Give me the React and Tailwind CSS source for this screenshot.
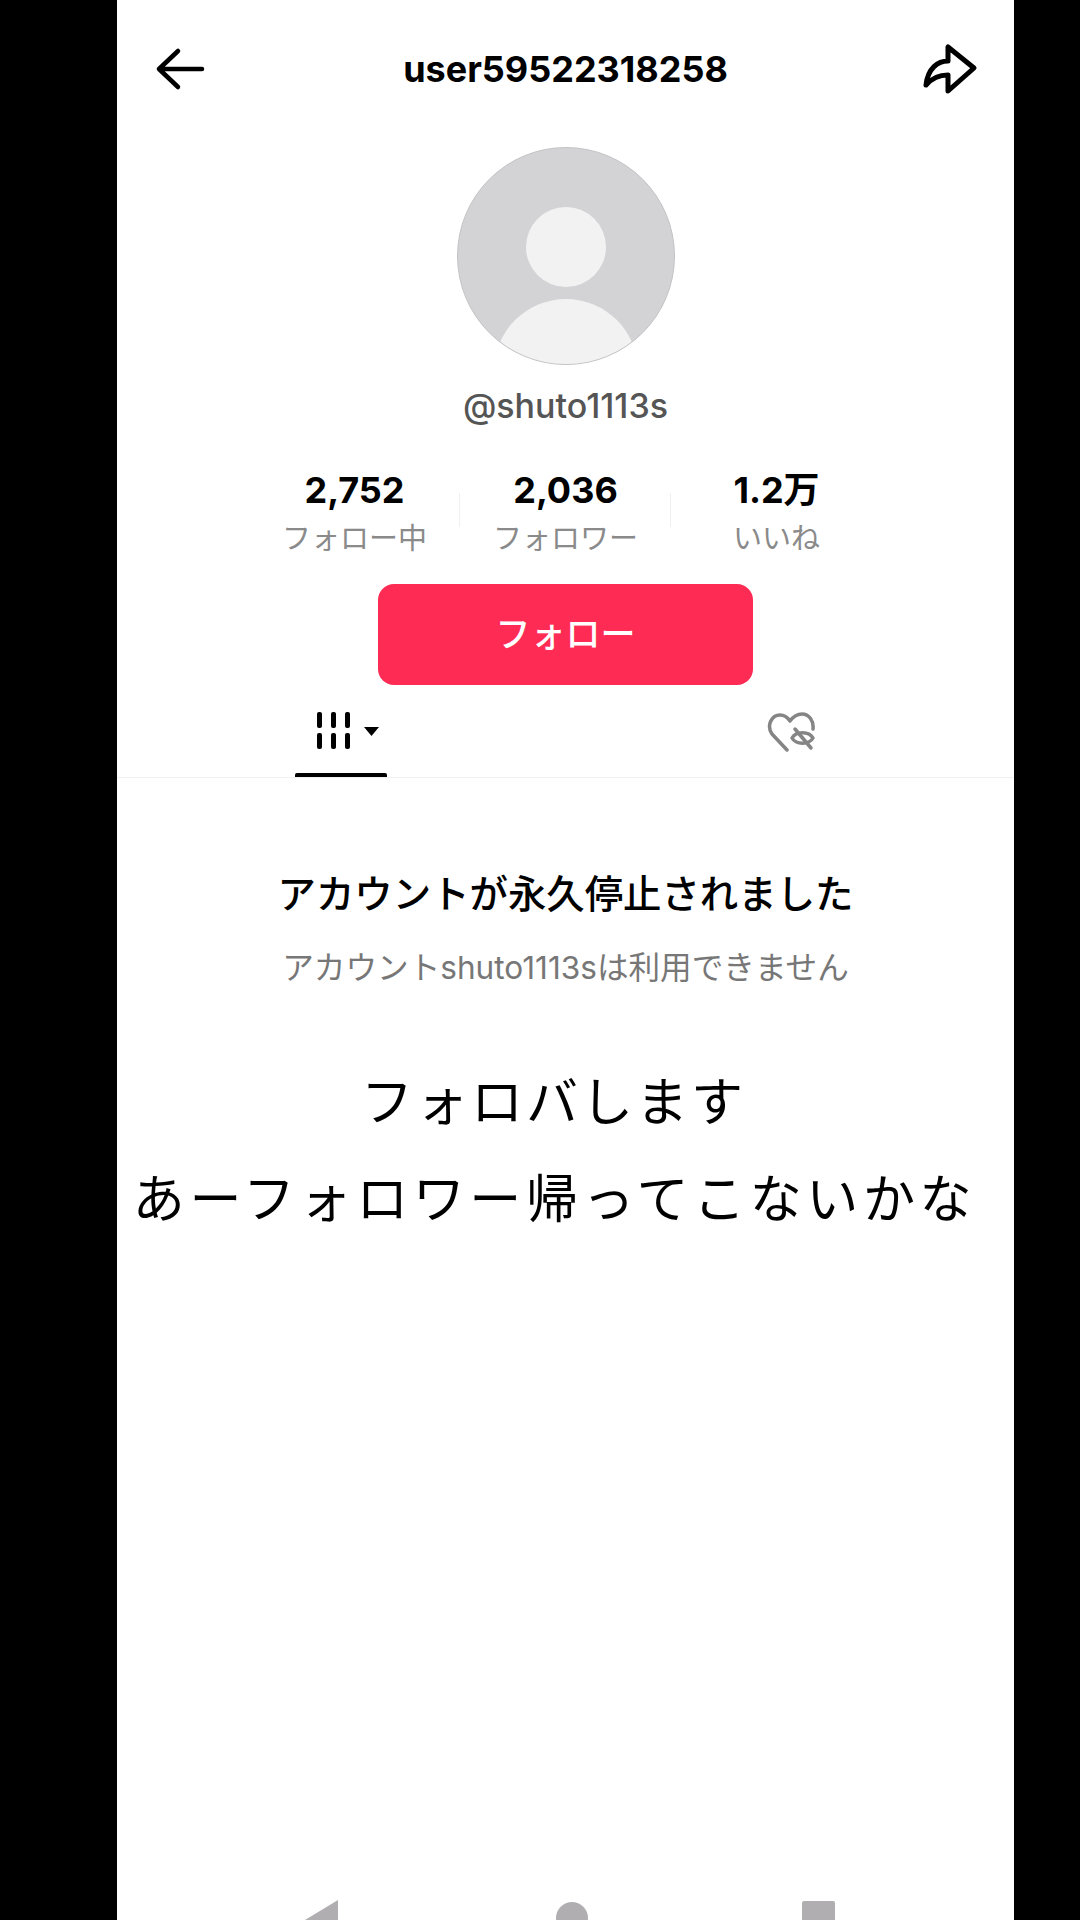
const STATS = [
  { value: '2,752', label: 'フォロー中' },
  { value: '2,036', label: 'フォロワー' },
  { value: '1.2万', label: 'いいね' },
]

function BackIcon() {
  return (
    <svg width="60" height="60" viewBox="0 0 60 60" fill="none" stroke="#000" strokeWidth="4.5" strokeLinecap="round" strokeLinejoin="round">
      <path d="M8 30H51M8 30L27 12M8 30L27 48" />
    </svg>
  )
}

function ShareIcon() {
  return (
    <svg width="60" height="60" viewBox="0 0 60 60" fill="none" stroke="#000" strokeWidth="5" strokeLinejoin="round">
      <path d="M54 29L28 8V22C18 22 8 29 6 46C12 39 20 36 28 36V52Z" />
    </svg>
  )
}

function GridIcon() {
  return (
    <svg width="70" height="40" viewBox="0 0 70 40" fill="#000">
      <rect x="2" y="0" width="5" height="16" rx="2" />
      <rect x="16" y="0" width="5" height="16" rx="2" />
      <rect x="30" y="0" width="5" height="16" rx="2" />
      <rect x="2" y="21" width="5" height="16" rx="2" />
      <rect x="16" y="21" width="5" height="16" rx="2" />
      <rect x="30" y="21" width="5" height="16" rx="2" />
      <path d="M49 15H64L56.500 24Z" />
    </svg>
  )
}

function HeartEyeOffIcon() {
  return (
    <svg width="50" height="44" viewBox="0 0 50 44" fill="none" stroke="#858585" strokeWidth="3.5" strokeLinecap="round" strokeLinejoin="round">
      <path d="M20 39L5 23C-1 14 5 4 13 4C18 4 21 7 23 10C26 6 30 3 35 3C42 3 47 10 46 18" />
      <path d="M25 27C29 20 42 20 46 27C42 34 29 34 25 27Z" />
      <path d="M28 18L44 37" />
    </svg>
  )
}

function Avatar() {
  return (
    <div className="relative w-[218px] h-[218px] rounded-full bg-[#d3d2d5] border border-[#c4c3c6] overflow-hidden shrink-0">
      <div className="absolute left-[68px] top-[59px] w-[80px] h-[80px] rounded-full bg-[#f2f2f3]" />
      <div className="absolute left-[36px] top-[151px] w-[144px] h-[144px] rounded-full bg-[#f2f2f3]" />
    </div>
  )
}

function Stat({ value, label }) {
  return (
    <div className="flex flex-col items-center">
      <div className="h-[48px] flex items-center text-[36px] font-bold text-black leading-none">{value}</div>
      <div className="h-[48px] flex items-center text-[29px] text-[#8a8a8a] leading-none">{label}</div>
    </div>
  )
}

export default function App() {
  return (
    <div className="w-[1080px] h-[1920px] bg-black overflow-hidden pl-[117px] font-[Inter,'Noto_Sans_CJK_JP',sans-serif]">
      <div className="w-[897px] h-full bg-white flex flex-col items-center">
        <header className="w-full h-[138px] shrink-0 flex items-center justify-between pl-[34px] pr-[34px]">
          <BackIcon />
          <h1 className="text-[36px] font-bold text-black leading-none">user59522318258</h1>
          <ShareIcon />
        </header>
        <div className="mt-[9px]"><Avatar /></div>
        <div className="mt-[21px] h-[40px] flex items-center text-[34px] font-medium text-[#555555] leading-none">@shuto1113s</div>
        <div className="mt-[40px] grid grid-cols-3 w-[633px]">
          {STATS.map((s, i) => (
            <div key={s.label} className="relative">
              <Stat value={s.value} label={s.label} />
              {i < 2 && <div className="absolute right-0 top-[27px] w-px h-[34px] bg-[#f0f0f0]" />}
            </div>
          ))}
        </div>
        <button className="mt-[22px] w-[375px] h-[101px] rounded-[16px] bg-[#fe2c55] text-white text-[35px] font-medium leading-none shrink-0">フォロー</button>
        <nav className="w-full h-[93px] grid grid-cols-2 border-b border-[#f0f0f0] shrink-0">
          <div className="relative flex justify-center pt-[27px]">
            <div className="pl-[18px]"><GridIcon /></div>
            <div className="absolute bottom-0 left-[178px] w-[92px] h-[4px] rounded-t-[2px] bg-black" />
          </div>
          <div className="flex justify-center pt-[26px]">
            <div className="pl-[5px]"><HeartEyeOffIcon /></div>
          </div>
        </nav>
        <h2 className="mt-[91px] h-[50px] flex items-center text-[38.4px] font-medium text-black leading-none">アカウントが永久停止されました</h2>
        <p className="mt-[24px] h-[50px] flex items-center text-[31.6px] text-[#777777] leading-none">アカウントshuto1113sは利用できません</p>
        <div className="mt-[65px] h-[90px] pr-[24px] flex items-center text-[52px] text-black leading-none tracking-[3px]">フォロバします</div>
        <div className="mt-[7px] h-[90px] pr-[22px] flex items-center text-[52px] text-black leading-none tracking-[4.6px] whitespace-nowrap">あーフォロワー帰ってこないかな</div>
        <div className="mt-auto w-full h-[20px] overflow-hidden flex items-start pl-[188px]">
          <svg width="33" height="40" viewBox="0 0 33 40" fill="#b0aeb1" className="shrink-0">
            <path d="M33 0V40H0V20Z" />
          </svg>
          <div className="ml-[218px] w-[32px] h-[32px] mt-[2px] rounded-full bg-[#b0aeb1] shrink-0" />
          <div className="ml-[214px] w-[33px] h-[33px] mt-[1px] rounded-[2px] bg-[#b0aeb1] shrink-0" />
        </div>
      </div>
    </div>
  )
}
